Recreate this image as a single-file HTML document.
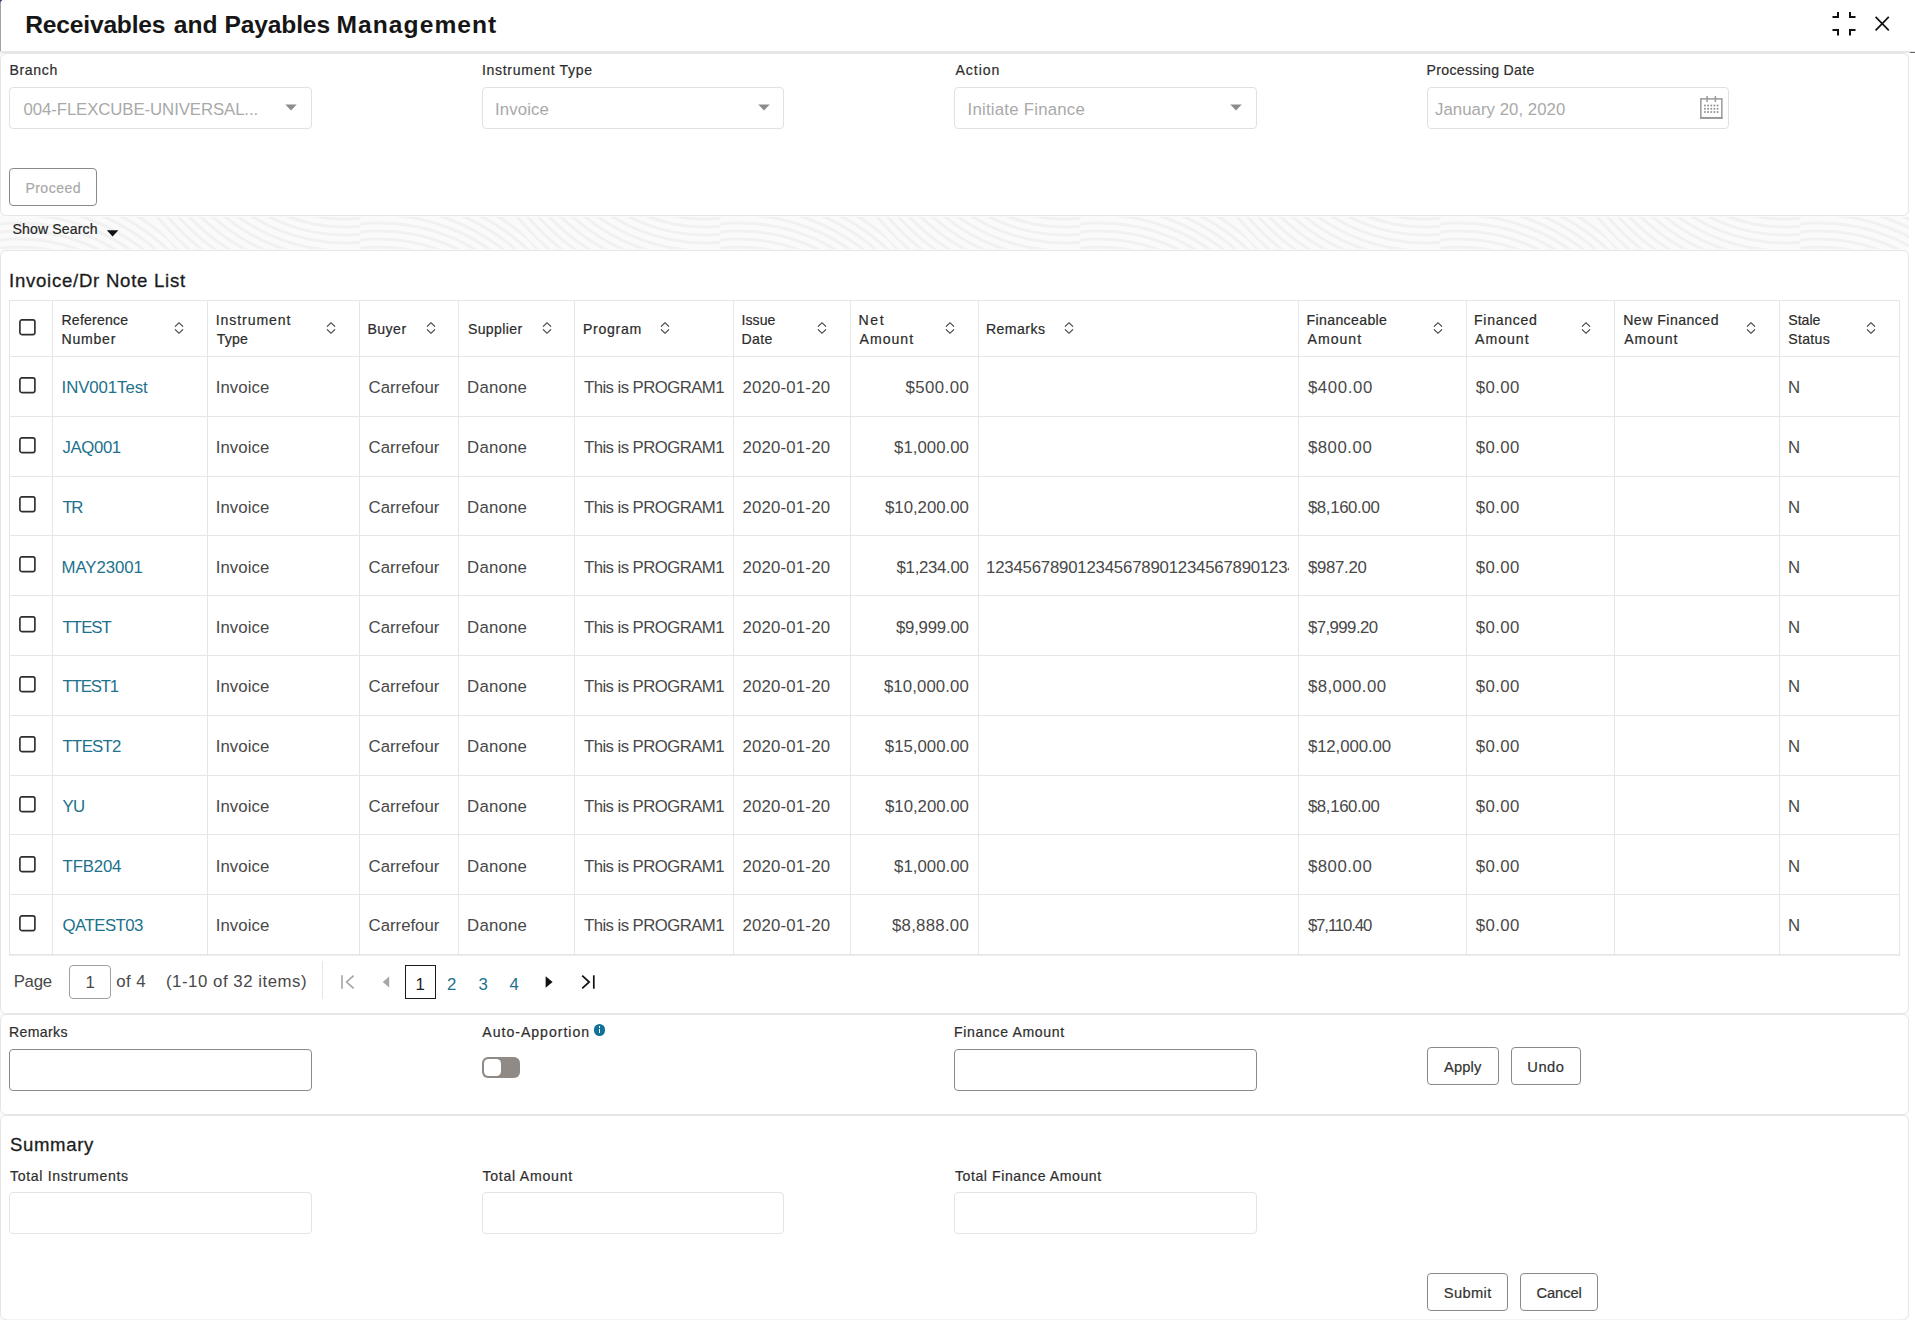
<!DOCTYPE html>
<html><head><meta charset="utf-8"><title>Receivables and Payables Management</title><style>
html,body{margin:0;padding:0;}body{width:1915px;height:1323px;position:relative;overflow:hidden;background:#fff;font-family:"Liberation Sans", sans-serif;}
.t{position:absolute;white-space:nowrap;}
</style></head><body>
<div style="position:absolute;left:0px;top:53px;width:1909px;height:1267px;background:#fafafa;"></div>
<svg style="position:absolute;left:0;top:217px" width="1909" height="32"><defs><clipPath id="c1"><path d="M0 0H150L200 64H0Z"/></clipPath><clipPath id="c2"><path d="M150 0H360V64H200Z"/></clipPath><pattern id="tx" width="360" height="64" patternUnits="userSpaceOnUse"><g fill="none" stroke="#f1f1f1" stroke-width="3"><g clip-path="url(#c1)"><circle cx="20" cy="190" r="24"/><circle cx="20" cy="190" r="32"/><circle cx="20" cy="190" r="40"/><circle cx="20" cy="190" r="48"/><circle cx="20" cy="190" r="56"/><circle cx="20" cy="190" r="64"/><circle cx="20" cy="190" r="72"/><circle cx="20" cy="190" r="80"/><circle cx="20" cy="190" r="88"/><circle cx="20" cy="190" r="96"/><circle cx="20" cy="190" r="104"/><circle cx="20" cy="190" r="112"/><circle cx="20" cy="190" r="120"/><circle cx="20" cy="190" r="128"/><circle cx="20" cy="190" r="136"/><circle cx="20" cy="190" r="144"/><circle cx="20" cy="190" r="152"/><circle cx="20" cy="190" r="160"/><circle cx="20" cy="190" r="168"/><circle cx="20" cy="190" r="176"/><circle cx="20" cy="190" r="184"/><circle cx="20" cy="190" r="192"/><circle cx="20" cy="190" r="200"/><circle cx="20" cy="190" r="208"/><circle cx="20" cy="190" r="216"/><circle cx="20" cy="190" r="224"/><circle cx="20" cy="190" r="232"/><circle cx="20" cy="190" r="240"/><circle cx="20" cy="190" r="248"/><circle cx="20" cy="190" r="256"/><circle cx="20" cy="190" r="264"/><circle cx="20" cy="190" r="272"/><circle cx="20" cy="190" r="280"/><circle cx="20" cy="190" r="288"/><circle cx="20" cy="190" r="296"/><circle cx="20" cy="190" r="304"/><circle cx="20" cy="190" r="312"/><circle cx="20" cy="190" r="320"/><circle cx="20" cy="190" r="328"/></g><g clip-path="url(#c2)"><circle cx="345" cy="-150" r="24"/><circle cx="345" cy="-150" r="32"/><circle cx="345" cy="-150" r="40"/><circle cx="345" cy="-150" r="48"/><circle cx="345" cy="-150" r="56"/><circle cx="345" cy="-150" r="64"/><circle cx="345" cy="-150" r="72"/><circle cx="345" cy="-150" r="80"/><circle cx="345" cy="-150" r="88"/><circle cx="345" cy="-150" r="96"/><circle cx="345" cy="-150" r="104"/><circle cx="345" cy="-150" r="112"/><circle cx="345" cy="-150" r="120"/><circle cx="345" cy="-150" r="128"/><circle cx="345" cy="-150" r="136"/><circle cx="345" cy="-150" r="144"/><circle cx="345" cy="-150" r="152"/><circle cx="345" cy="-150" r="160"/><circle cx="345" cy="-150" r="168"/><circle cx="345" cy="-150" r="176"/><circle cx="345" cy="-150" r="184"/><circle cx="345" cy="-150" r="192"/><circle cx="345" cy="-150" r="200"/><circle cx="345" cy="-150" r="208"/><circle cx="345" cy="-150" r="216"/><circle cx="345" cy="-150" r="224"/><circle cx="345" cy="-150" r="232"/><circle cx="345" cy="-150" r="240"/><circle cx="345" cy="-150" r="248"/><circle cx="345" cy="-150" r="256"/><circle cx="345" cy="-150" r="264"/><circle cx="345" cy="-150" r="272"/><circle cx="345" cy="-150" r="280"/><circle cx="345" cy="-150" r="288"/><circle cx="345" cy="-150" r="296"/><circle cx="345" cy="-150" r="304"/><circle cx="345" cy="-150" r="312"/><circle cx="345" cy="-150" r="320"/><circle cx="345" cy="-150" r="328"/></g></g></pattern></defs><rect width="1909" height="32" fill="url(#tx)"/></svg>
<div style="position:absolute;left:0px;top:0px;width:1915px;height:51px;background:#fff;"></div>
<div style="position:absolute;left:0px;top:51px;width:1915px;height:2px;background:#e6e6e6;"></div>
<div style="position:absolute;left:1910px;top:52px;width:5px;height:1px;background:#666;"></div>
<div style="position:absolute;left:0px;top:2px;width:1px;height:49px;background:#a2a2a8;"></div>
<svg style="position:absolute;left:0px;top:0px" width="3" height="3" viewBox="0 0 3 3"><path d="M0 0H2.4L0 2.4Z" fill="#3b4070"/></svg>
<svg style="position:absolute;left:1830px;top:10px" width="28" height="28" viewBox="0 0 28 28"><g fill="none" stroke="#111" stroke-width="2"><path d="M2.5 7H8V2"/><path d="M25.5 7H20V2"/><path d="M2.5 20H8V25.5"/><path d="M25.5 20H20V25.5"/></g></svg>
<svg style="position:absolute;left:1873px;top:14px" width="20" height="20" viewBox="0 0 20 20"><path d="M2.6 2.9L15.8 16.3M15.8 2.9L2.6 16.3" stroke="#111" stroke-width="1.7" fill="none"/></svg>
<div style="position:absolute;left:0px;top:53px;width:1907px;height:161px;border:1px solid #e6e6e6;border-radius:6px;background:#fff;"></div>
<div style="position:absolute;left:0px;top:249.5px;width:1907px;height:762.0px;border:1px solid #e6e6e6;border-radius:6px;background:#fff;"></div>
<div style="position:absolute;left:0px;top:1013.5px;width:1907px;height:99.0px;border:1px solid #e6e6e6;border-radius:6px;background:#fff;"></div>
<div style="position:absolute;left:0px;top:1114.5px;width:1907px;height:203.5px;border:1px solid #e6e6e6;border-radius:6px;background:#fff;"></div>
<div style="position:absolute;left:6px;top:1319px;width:1897px;height:1px;background:#f3f3f3;"></div>
<div style="position:absolute;left:9px;top:87px;width:301px;height:40px;border:1px solid #e1e1e1;border-radius:4px;background:#fff;"></div>
<div style="position:absolute;left:482px;top:87px;width:300px;height:40px;border:1px solid #e1e1e1;border-radius:4px;background:#fff;"></div>
<div style="position:absolute;left:954px;top:87px;width:301px;height:40px;border:1px solid #e1e1e1;border-radius:4px;background:#fff;"></div>
<svg style="position:absolute;left:285px;top:104px" width="13" height="8" viewBox="0 0 13 8"><path d="M0.3 0.6H11.7L6 6.4Z" fill="#8c8c8c"/></svg>
<svg style="position:absolute;left:757.5px;top:104px" width="13" height="8" viewBox="0 0 13 8"><path d="M0.3 0.6H11.7L6 6.4Z" fill="#8c8c8c"/></svg>
<svg style="position:absolute;left:1230px;top:104px" width="13" height="8" viewBox="0 0 13 8"><path d="M0.3 0.6H11.7L6 6.4Z" fill="#8c8c8c"/></svg>
<div style="position:absolute;left:1427px;top:87px;width:300px;height:40px;border:1px solid #e1e1e1;border-radius:4px;background:#fff;"></div>
<svg style="position:absolute;left:1699px;top:95px" width="26" height="26" viewBox="0 0 26 26"><g fill="none" stroke="#999" stroke-width="1.5"><rect x="1.85" y="3.85" width="21" height="19.2"/><path d="M8.1 1V7M16.4 1V7"/><path d="M1.1 22.9H23.6" stroke-width="1.9"/></g><g fill="#8e8e8e"><rect x="5.05" y="9.65" width="1.7" height="1.7"/><rect x="8.25" y="9.65" width="1.7" height="1.7"/><rect x="11.45" y="9.65" width="1.7" height="1.7"/><rect x="14.55" y="9.65" width="1.7" height="1.7"/><rect x="17.75" y="9.65" width="1.7" height="1.7"/><rect x="5.05" y="12.95" width="1.7" height="1.7"/><rect x="8.25" y="12.95" width="1.7" height="1.7"/><rect x="11.45" y="12.95" width="1.7" height="1.7"/><rect x="14.55" y="12.95" width="1.7" height="1.7"/><rect x="17.75" y="12.95" width="1.7" height="1.7"/><rect x="5.05" y="16.15" width="1.7" height="1.7"/><rect x="8.25" y="16.15" width="1.7" height="1.7"/><rect x="11.45" y="16.15" width="1.7" height="1.7"/><rect x="14.55" y="16.15" width="1.7" height="1.7"/><rect x="17.75" y="16.15" width="1.7" height="1.7"/></g></svg>
<div style="position:absolute;left:9px;top:168px;width:86px;height:36px;border:1px solid #8a8a8a;border-radius:4px;background:#fff;"></div>
<svg style="position:absolute;left:106px;top:229px" width="14" height="9" viewBox="0 0 14 9"><path d="M0.8 1.2H12.4L6.6 7.6Z" fill="#111"/></svg>
<div style="position:absolute;left:9px;top:300px;width:1891px;height:1px;background:#e6e6e6;"></div>
<div style="position:absolute;left:9px;top:356px;width:1891px;height:1px;background:#e6e6e6;"></div>
<div style="position:absolute;left:9px;top:416px;width:1891px;height:1px;background:#e6e6e6;"></div>
<div style="position:absolute;left:9px;top:476px;width:1891px;height:1px;background:#e6e6e6;"></div>
<div style="position:absolute;left:9px;top:535px;width:1891px;height:1px;background:#e6e6e6;"></div>
<div style="position:absolute;left:9px;top:595px;width:1891px;height:1px;background:#e6e6e6;"></div>
<div style="position:absolute;left:9px;top:655px;width:1891px;height:1px;background:#e6e6e6;"></div>
<div style="position:absolute;left:9px;top:715px;width:1891px;height:1px;background:#e6e6e6;"></div>
<div style="position:absolute;left:9px;top:775px;width:1891px;height:1px;background:#e6e6e6;"></div>
<div style="position:absolute;left:9px;top:834px;width:1891px;height:1px;background:#e6e6e6;"></div>
<div style="position:absolute;left:9px;top:894px;width:1891px;height:1px;background:#e6e6e6;"></div>
<div style="position:absolute;left:9px;top:954px;width:1891px;height:1px;background:#e6e6e6;"></div>
<div style="position:absolute;left:9px;top:955px;width:1891px;height:1px;background:#ececec;"></div>
<div style="position:absolute;left:9px;top:300px;width:1px;height:655px;background:#e6e6e6;"></div>
<div style="position:absolute;left:52px;top:300px;width:1px;height:655px;background:#e6e6e6;"></div>
<div style="position:absolute;left:207px;top:300px;width:1px;height:655px;background:#e6e6e6;"></div>
<div style="position:absolute;left:359px;top:300px;width:1px;height:655px;background:#e6e6e6;"></div>
<div style="position:absolute;left:458px;top:300px;width:1px;height:655px;background:#e6e6e6;"></div>
<div style="position:absolute;left:574px;top:300px;width:1px;height:655px;background:#e6e6e6;"></div>
<div style="position:absolute;left:733px;top:300px;width:1px;height:655px;background:#e6e6e6;"></div>
<div style="position:absolute;left:850px;top:300px;width:1px;height:655px;background:#e6e6e6;"></div>
<div style="position:absolute;left:978px;top:300px;width:1px;height:655px;background:#e6e6e6;"></div>
<div style="position:absolute;left:1298px;top:300px;width:1px;height:655px;background:#e6e6e6;"></div>
<div style="position:absolute;left:1466px;top:300px;width:1px;height:655px;background:#e6e6e6;"></div>
<div style="position:absolute;left:1614px;top:300px;width:1px;height:655px;background:#e6e6e6;"></div>
<div style="position:absolute;left:1779px;top:300px;width:1px;height:655px;background:#e6e6e6;"></div>
<div style="position:absolute;left:1899px;top:300px;width:1px;height:655px;background:#e6e6e6;"></div>
<svg style="position:absolute;left:18px;top:318.4px" width="19" height="19" viewBox="0 0 19 19"><rect x="1.9" y="1.9" width="15" height="14.7" rx="2" fill="#fff" stroke="#2e2e2e" stroke-width="1.65"/></svg>
<svg style="position:absolute;left:173.2px;top:321px" width="12" height="14" viewBox="0 0 12 14"><g fill="none" stroke="#3a3a3a" stroke-width="1.15"><path d="M2 5.6L6 1.7L10 5.6"/><path d="M2 8.4L6 12.3L10 8.4"/></g></svg>
<svg style="position:absolute;left:325.2px;top:321px" width="12" height="14" viewBox="0 0 12 14"><g fill="none" stroke="#3a3a3a" stroke-width="1.15"><path d="M2 5.6L6 1.7L10 5.6"/><path d="M2 8.4L6 12.3L10 8.4"/></g></svg>
<svg style="position:absolute;left:424.5px;top:321px" width="12" height="14" viewBox="0 0 12 14"><g fill="none" stroke="#3a3a3a" stroke-width="1.15"><path d="M2 5.6L6 1.7L10 5.6"/><path d="M2 8.4L6 12.3L10 8.4"/></g></svg>
<svg style="position:absolute;left:540.5px;top:321px" width="12" height="14" viewBox="0 0 12 14"><g fill="none" stroke="#3a3a3a" stroke-width="1.15"><path d="M2 5.6L6 1.7L10 5.6"/><path d="M2 8.4L6 12.3L10 8.4"/></g></svg>
<svg style="position:absolute;left:658.5px;top:321px" width="12" height="14" viewBox="0 0 12 14"><g fill="none" stroke="#3a3a3a" stroke-width="1.15"><path d="M2 5.6L6 1.7L10 5.6"/><path d="M2 8.4L6 12.3L10 8.4"/></g></svg>
<svg style="position:absolute;left:816.2px;top:321px" width="12" height="14" viewBox="0 0 12 14"><g fill="none" stroke="#3a3a3a" stroke-width="1.15"><path d="M2 5.6L6 1.7L10 5.6"/><path d="M2 8.4L6 12.3L10 8.4"/></g></svg>
<svg style="position:absolute;left:944.2px;top:321px" width="12" height="14" viewBox="0 0 12 14"><g fill="none" stroke="#3a3a3a" stroke-width="1.15"><path d="M2 5.6L6 1.7L10 5.6"/><path d="M2 8.4L6 12.3L10 8.4"/></g></svg>
<svg style="position:absolute;left:1063.0px;top:321px" width="12" height="14" viewBox="0 0 12 14"><g fill="none" stroke="#3a3a3a" stroke-width="1.15"><path d="M2 5.6L6 1.7L10 5.6"/><path d="M2 8.4L6 12.3L10 8.4"/></g></svg>
<svg style="position:absolute;left:1432.2px;top:321px" width="12" height="14" viewBox="0 0 12 14"><g fill="none" stroke="#3a3a3a" stroke-width="1.15"><path d="M2 5.6L6 1.7L10 5.6"/><path d="M2 8.4L6 12.3L10 8.4"/></g></svg>
<svg style="position:absolute;left:1580.2px;top:321px" width="12" height="14" viewBox="0 0 12 14"><g fill="none" stroke="#3a3a3a" stroke-width="1.15"><path d="M2 5.6L6 1.7L10 5.6"/><path d="M2 8.4L6 12.3L10 8.4"/></g></svg>
<svg style="position:absolute;left:1745.2px;top:321px" width="12" height="14" viewBox="0 0 12 14"><g fill="none" stroke="#3a3a3a" stroke-width="1.15"><path d="M2 5.6L6 1.7L10 5.6"/><path d="M2 8.4L6 12.3L10 8.4"/></g></svg>
<svg style="position:absolute;left:1865.2px;top:321px" width="12" height="14" viewBox="0 0 12 14"><g fill="none" stroke="#3a3a3a" stroke-width="1.15"><path d="M2 5.6L6 1.7L10 5.6"/><path d="M2 8.4L6 12.3L10 8.4"/></g></svg>
<svg style="position:absolute;left:18px;top:376px" width="19" height="19" viewBox="0 0 19 19"><rect x="1.9" y="1.9" width="15" height="14.7" rx="2" fill="#fff" stroke="#2e2e2e" stroke-width="1.65"/></svg>
<svg style="position:absolute;left:18px;top:436px" width="19" height="19" viewBox="0 0 19 19"><rect x="1.9" y="1.9" width="15" height="14.7" rx="2" fill="#fff" stroke="#2e2e2e" stroke-width="1.65"/></svg>
<svg style="position:absolute;left:18px;top:495px" width="19" height="19" viewBox="0 0 19 19"><rect x="1.9" y="1.9" width="15" height="14.7" rx="2" fill="#fff" stroke="#2e2e2e" stroke-width="1.65"/></svg>
<svg style="position:absolute;left:18px;top:555px" width="19" height="19" viewBox="0 0 19 19"><rect x="1.9" y="1.9" width="15" height="14.7" rx="2" fill="#fff" stroke="#2e2e2e" stroke-width="1.65"/></svg>
<svg style="position:absolute;left:18px;top:615px" width="19" height="19" viewBox="0 0 19 19"><rect x="1.9" y="1.9" width="15" height="14.7" rx="2" fill="#fff" stroke="#2e2e2e" stroke-width="1.65"/></svg>
<svg style="position:absolute;left:18px;top:675px" width="19" height="19" viewBox="0 0 19 19"><rect x="1.9" y="1.9" width="15" height="14.7" rx="2" fill="#fff" stroke="#2e2e2e" stroke-width="1.65"/></svg>
<svg style="position:absolute;left:18px;top:735px" width="19" height="19" viewBox="0 0 19 19"><rect x="1.9" y="1.9" width="15" height="14.7" rx="2" fill="#fff" stroke="#2e2e2e" stroke-width="1.65"/></svg>
<svg style="position:absolute;left:18px;top:795px" width="19" height="19" viewBox="0 0 19 19"><rect x="1.9" y="1.9" width="15" height="14.7" rx="2" fill="#fff" stroke="#2e2e2e" stroke-width="1.65"/></svg>
<svg style="position:absolute;left:18px;top:855px" width="19" height="19" viewBox="0 0 19 19"><rect x="1.9" y="1.9" width="15" height="14.7" rx="2" fill="#fff" stroke="#2e2e2e" stroke-width="1.65"/></svg>
<svg style="position:absolute;left:18px;top:914px" width="19" height="19" viewBox="0 0 19 19"><rect x="1.9" y="1.9" width="15" height="14.7" rx="2" fill="#fff" stroke="#2e2e2e" stroke-width="1.65"/></svg>
<div style="position:absolute;left:69px;top:965px;width:40px;height:32px;border:1px solid #a0a0a0;border-radius:4px;background:#fff;"></div>
<div style="position:absolute;left:322px;top:961px;width:1px;height:38px;background:#e6e6e6;"></div>
<svg style="position:absolute;left:338.6px;top:973px" width="18" height="18" viewBox="0 0 18 18"><g fill="none" stroke="#a3a3a3" stroke-width="1.6"><path d="M3 2.3V15.7"/><path d="M14.6 2.6L7.6 9L14.6 15.4"/></g></svg>
<svg style="position:absolute;left:380px;top:974px" width="12" height="16" viewBox="0 0 12 16"><path d="M9.2 2.6V13.4L2.8 8Z" fill="#a6a6a6"/></svg>
<div style="position:absolute;left:405px;top:965px;width:29px;height:32px;border:1px solid #1a1a1a;border-radius:0px;background:#fff;"></div>
<svg style="position:absolute;left:543px;top:974px" width="12" height="16" viewBox="0 0 12 16"><path d="M2.6 2.2V13.8L9.6 8Z" fill="#111"/></svg>
<svg style="position:absolute;left:579px;top:973px" width="18" height="18" viewBox="0 0 18 18"><g fill="none" stroke="#111" stroke-width="1.7"><path d="M14.8 2.3V15.7"/><path d="M3.2 2.6L10.2 9L3.2 15.4"/></g></svg>
<div style="position:absolute;left:9px;top:1049px;width:301px;height:40px;border:1px solid #8a8a8a;border-radius:4px;background:#fff;"></div>
<div style="position:absolute;left:593.8px;top:1024.2px;width:11.4px;height:11.4px;border-radius:50%;background:#0f7298"></div>
<div style="position:absolute;left:598.9px;top:1026.3px;width:1.3px;height:1.5px;background:#fff;"></div>
<div style="position:absolute;left:598.9px;top:1028.6px;width:1.3px;height:4.6px;background:#fff;"></div>
<div style="position:absolute;left:482px;top:1057.2px;width:38px;height:21.3px;border-radius:6px;background:#8f8a86"></div>
<div style="position:absolute;left:483.8px;top:1058.9px;width:17.2px;height:17.5px;border-radius:4.5px;background:#fff"></div>
<div style="position:absolute;left:954px;top:1049px;width:301px;height:40px;border:1px solid #8a8a8a;border-radius:4px;background:#fff;"></div>
<div style="position:absolute;left:1427px;top:1047px;width:70px;height:36px;border:1px solid #8a8a8a;border-radius:4px;background:#fff;"></div>
<div style="position:absolute;left:1511px;top:1047px;width:68px;height:36px;border:1px solid #8a8a8a;border-radius:4px;background:#fff;"></div>
<div style="position:absolute;left:9px;top:1192px;width:301px;height:40px;border:1px solid #e4e4e4;border-radius:4px;background:#fff;"></div>
<div style="position:absolute;left:482px;top:1192px;width:300px;height:40px;border:1px solid #e4e4e4;border-radius:4px;background:#fff;"></div>
<div style="position:absolute;left:954px;top:1192px;width:301px;height:40px;border:1px solid #e4e4e4;border-radius:4px;background:#fff;"></div>
<div style="position:absolute;left:1427px;top:1273px;width:79px;height:36px;border:1px solid #8a8a8a;border-radius:4px;background:#fff;"></div>
<div style="position:absolute;left:1520px;top:1273px;width:76px;height:36px;border:1px solid #8a8a8a;border-radius:4px;background:#fff;"></div>
<span class="t" id="t0" style="top:12.60px;font-size:24.6px;line-height:24.6px;font-weight:700;color:#161616;letter-spacing:-0.202px;left:25.30px;">Receivables</span>
<span class="t" id="t1" style="top:12.60px;font-size:24.6px;line-height:24.6px;font-weight:700;color:#161616;letter-spacing:-0.050px;left:173.80px;">and</span>
<span class="t" id="t2" style="top:12.60px;font-size:24.6px;line-height:24.6px;font-weight:700;color:#161616;letter-spacing:-0.139px;left:224.40px;">Payables</span>
<span class="t" id="t3" style="top:12.60px;font-size:24.6px;line-height:24.6px;font-weight:700;color:#161616;letter-spacing:1.052px;left:336.50px;">Management</span>
<span class="t" id="t4" style="top:63.00px;font-size:14.1px;line-height:14.1px;font-weight:400;color:#2e2e2e;-webkit-text-stroke:0.2px #2e2e2e;letter-spacing:0.637px;left:9.50px;">Branch</span>
<span class="t" id="t5" style="top:101.80px;font-size:16.8px;line-height:16.8px;font-weight:400;color:#a9a9a9;letter-spacing:-0.092px;left:23.50px;">004-FLEXCUBE-UNIVERSAL...</span>
<span class="t" id="t6" style="top:63.00px;font-size:14.1px;line-height:14.1px;font-weight:400;color:#2e2e2e;-webkit-text-stroke:0.2px #2e2e2e;letter-spacing:0.663px;left:482.00px;">Instrument Type</span>
<span class="t" id="t7" style="top:101.80px;font-size:16.8px;line-height:16.8px;font-weight:400;color:#a9a9a9;letter-spacing:0.110px;left:495.00px;">Invoice</span>
<span class="t" id="t8" style="top:63.00px;font-size:14.1px;line-height:14.1px;font-weight:400;color:#2e2e2e;-webkit-text-stroke:0.2px #2e2e2e;letter-spacing:0.934px;left:955.50px;">Action</span>
<span class="t" id="t9" style="top:101.80px;font-size:16.8px;line-height:16.8px;font-weight:400;color:#a9a9a9;letter-spacing:0.235px;left:967.50px;">Initiate Finance</span>
<span class="t" id="t10" style="top:63.00px;font-size:14.1px;line-height:14.1px;font-weight:400;color:#2e2e2e;-webkit-text-stroke:0.2px #2e2e2e;letter-spacing:0.317px;left:1426.50px;">Processing Date</span>
<span class="t" id="t11" style="top:101.80px;font-size:16.8px;line-height:16.8px;font-weight:400;color:#a9a9a9;letter-spacing:0.043px;left:1435.00px;">January 20, 2020</span>
<span class="t" id="t12" style="top:180.61px;font-size:14.1px;line-height:14.1px;font-weight:400;color:#a9a9a9;-webkit-text-stroke:0.2px #a9a9a9;letter-spacing:0.441px;left:25.40px;">Proceed</span>
<span class="t" id="t13" style="top:221.51px;font-size:14.1px;line-height:14.1px;font-weight:400;color:#262626;-webkit-text-stroke:0.2px #262626;letter-spacing:0.131px;left:12.50px;">Show Search</span>
<span class="t" id="t14" style="top:271.71px;font-size:18.6px;line-height:18.6px;font-weight:400;color:#1c1c1c;-webkit-text-stroke:0.3px #1c1c1c;letter-spacing:0.733px;left:9.00px;">Invoice/Dr Note List</span>
<span class="t" id="t15" style="top:313.01px;font-size:14.1px;line-height:14.1px;font-weight:400;color:#2b2b2b;-webkit-text-stroke:0.2px #2b2b2b;letter-spacing:0.189px;left:61.50px;">Reference</span>
<span class="t" id="t16" style="top:331.91px;font-size:14.1px;line-height:14.1px;font-weight:400;color:#2b2b2b;-webkit-text-stroke:0.2px #2b2b2b;letter-spacing:0.753px;left:61.50px;">Number</span>
<span class="t" id="t17" style="top:313.01px;font-size:14.1px;line-height:14.1px;font-weight:400;color:#2b2b2b;-webkit-text-stroke:0.2px #2b2b2b;letter-spacing:0.915px;left:215.70px;">Instrument</span>
<span class="t" id="t18" style="top:331.91px;font-size:14.1px;line-height:14.1px;font-weight:400;color:#2b2b2b;-webkit-text-stroke:0.2px #2b2b2b;letter-spacing:0.228px;left:216.70px;">Type</span>
<span class="t" id="t19" style="top:322.01px;font-size:14.1px;line-height:14.1px;font-weight:400;color:#2b2b2b;-webkit-text-stroke:0.2px #2b2b2b;letter-spacing:0.469px;left:367.40px;">Buyer</span>
<span class="t" id="t20" style="top:322.01px;font-size:14.1px;line-height:14.1px;font-weight:400;color:#2b2b2b;-webkit-text-stroke:0.2px #2b2b2b;letter-spacing:0.355px;left:467.90px;">Supplier</span>
<span class="t" id="t21" style="top:322.01px;font-size:14.1px;line-height:14.1px;font-weight:400;color:#2b2b2b;-webkit-text-stroke:0.2px #2b2b2b;letter-spacing:0.683px;left:583.00px;">Program</span>
<span class="t" id="t22" style="top:313.01px;font-size:14.1px;line-height:14.1px;font-weight:400;color:#2b2b2b;-webkit-text-stroke:0.2px #2b2b2b;letter-spacing:0.088px;left:741.40px;">Issue</span>
<span class="t" id="t23" style="top:331.91px;font-size:14.1px;line-height:14.1px;font-weight:400;color:#2b2b2b;-webkit-text-stroke:0.2px #2b2b2b;letter-spacing:0.389px;left:741.40px;">Date</span>
<span class="t" id="t24" style="top:313.01px;font-size:14.1px;line-height:14.1px;font-weight:400;color:#2b2b2b;-webkit-text-stroke:0.2px #2b2b2b;letter-spacing:1.642px;left:858.50px;">Net</span>
<span class="t" id="t25" style="top:331.91px;font-size:14.1px;line-height:14.1px;font-weight:400;color:#2b2b2b;-webkit-text-stroke:0.2px #2b2b2b;letter-spacing:1.009px;left:859.50px;">Amount</span>
<span class="t" id="t26" style="top:322.01px;font-size:14.1px;line-height:14.1px;font-weight:400;color:#2b2b2b;-webkit-text-stroke:0.2px #2b2b2b;letter-spacing:0.427px;left:986.00px;">Remarks</span>
<span class="t" id="t27" style="top:313.01px;font-size:14.1px;line-height:14.1px;font-weight:400;color:#2b2b2b;-webkit-text-stroke:0.2px #2b2b2b;letter-spacing:0.365px;left:1306.50px;">Financeable</span>
<span class="t" id="t28" style="top:331.91px;font-size:14.1px;line-height:14.1px;font-weight:400;color:#2b2b2b;-webkit-text-stroke:0.2px #2b2b2b;letter-spacing:1.009px;left:1307.50px;">Amount</span>
<span class="t" id="t29" style="top:313.01px;font-size:14.1px;line-height:14.1px;font-weight:400;color:#2b2b2b;-webkit-text-stroke:0.2px #2b2b2b;letter-spacing:0.694px;left:1474.00px;">Financed</span>
<span class="t" id="t30" style="top:331.91px;font-size:14.1px;line-height:14.1px;font-weight:400;color:#2b2b2b;-webkit-text-stroke:0.2px #2b2b2b;letter-spacing:1.009px;left:1475.00px;">Amount</span>
<span class="t" id="t31" style="top:313.01px;font-size:14.1px;line-height:14.1px;font-weight:400;color:#2b2b2b;-webkit-text-stroke:0.2px #2b2b2b;letter-spacing:0.477px;left:1623.20px;">New Financed</span>
<span class="t" id="t32" style="top:331.91px;font-size:14.1px;line-height:14.1px;font-weight:400;color:#2b2b2b;-webkit-text-stroke:0.2px #2b2b2b;letter-spacing:0.929px;left:1624.20px;">Amount</span>
<span class="t" id="t33" style="top:313.01px;font-size:14.1px;line-height:14.1px;font-weight:400;color:#2b2b2b;-webkit-text-stroke:0.2px #2b2b2b;letter-spacing:-0.021px;left:1788.30px;">Stale</span>
<span class="t" id="t34" style="top:331.91px;font-size:14.1px;line-height:14.1px;font-weight:400;color:#2b2b2b;-webkit-text-stroke:0.2px #2b2b2b;letter-spacing:0.298px;left:1788.30px;">Status</span>
<span class="t" id="t35" style="top:380.21px;font-size:16.8px;line-height:16.8px;font-weight:400;color:#22718c;letter-spacing:-0.076px;left:61.60px;">INV001Test</span>
<span class="t" id="t36" style="top:380.21px;font-size:16.8px;line-height:16.8px;font-weight:400;color:#484848;letter-spacing:0.077px;left:215.70px;">Invoice</span>
<span class="t" id="t37" style="top:380.21px;font-size:16.8px;line-height:16.8px;font-weight:400;color:#484848;letter-spacing:-0.024px;left:368.60px;">Carrefour</span>
<span class="t" id="t38" style="top:380.21px;font-size:16.8px;line-height:16.8px;font-weight:400;color:#484848;letter-spacing:0.170px;left:467.10px;">Danone</span>
<span class="t" id="t39" style="top:380.21px;font-size:16.8px;line-height:16.8px;font-weight:400;color:#484848;letter-spacing:-0.577px;left:584.00px;">This is PROGRAM1</span>
<span class="t" id="t40" style="top:380.21px;font-size:16.8px;line-height:16.8px;font-weight:400;color:#484848;letter-spacing:0.199px;left:742.40px;">2020-01-20</span>
<span class="t" id="t41" style="top:380.21px;font-size:16.8px;line-height:16.8px;font-weight:400;color:#484848;letter-spacing:0.445px;right:945.72px;">$500.00</span>
<span class="t" id="t42" style="top:380.21px;font-size:16.8px;line-height:16.8px;font-weight:400;color:#484848;letter-spacing:0.645px;left:1307.90px;">$400.00</span>
<span class="t" id="t43" style="top:380.21px;font-size:16.8px;line-height:16.8px;font-weight:400;color:#484848;letter-spacing:0.360px;left:1475.80px;">$0.00</span>
<span class="t" id="t44" style="top:380.21px;font-size:16.8px;line-height:16.8px;font-weight:400;color:#484848;left:1788.00px;">N</span>
<span class="t" id="t45" style="top:440.05px;font-size:16.8px;line-height:16.8px;font-weight:400;color:#22718c;letter-spacing:-0.420px;left:62.60px;">JAQ001</span>
<span class="t" id="t46" style="top:440.05px;font-size:16.8px;line-height:16.8px;font-weight:400;color:#484848;letter-spacing:0.077px;left:215.70px;">Invoice</span>
<span class="t" id="t47" style="top:440.05px;font-size:16.8px;line-height:16.8px;font-weight:400;color:#484848;letter-spacing:-0.024px;left:368.60px;">Carrefour</span>
<span class="t" id="t48" style="top:440.05px;font-size:16.8px;line-height:16.8px;font-weight:400;color:#484848;letter-spacing:0.170px;left:467.10px;">Danone</span>
<span class="t" id="t49" style="top:440.05px;font-size:16.8px;line-height:16.8px;font-weight:400;color:#484848;letter-spacing:-0.577px;left:584.00px;">This is PROGRAM1</span>
<span class="t" id="t50" style="top:440.05px;font-size:16.8px;line-height:16.8px;font-weight:400;color:#484848;letter-spacing:0.199px;left:742.40px;">2020-01-20</span>
<span class="t" id="t51" style="top:440.05px;font-size:16.8px;line-height:16.8px;font-weight:400;color:#484848;letter-spacing:0.010px;right:946.16px;">$1,000.00</span>
<span class="t" id="t52" style="top:440.05px;font-size:16.8px;line-height:16.8px;font-weight:400;color:#484848;letter-spacing:0.529px;left:1307.90px;">$800.00</span>
<span class="t" id="t53" style="top:440.05px;font-size:16.8px;line-height:16.8px;font-weight:400;color:#484848;letter-spacing:0.360px;left:1475.80px;">$0.00</span>
<span class="t" id="t54" style="top:440.05px;font-size:16.8px;line-height:16.8px;font-weight:400;color:#484848;left:1788.00px;">N</span>
<span class="t" id="t55" style="top:499.89px;font-size:16.8px;line-height:16.8px;font-weight:400;color:#22718c;letter-spacing:-1.500px;left:62.60px;">TR</span>
<span class="t" id="t56" style="top:499.89px;font-size:16.8px;line-height:16.8px;font-weight:400;color:#484848;letter-spacing:0.077px;left:215.70px;">Invoice</span>
<span class="t" id="t57" style="top:499.89px;font-size:16.8px;line-height:16.8px;font-weight:400;color:#484848;letter-spacing:-0.024px;left:368.60px;">Carrefour</span>
<span class="t" id="t58" style="top:499.89px;font-size:16.8px;line-height:16.8px;font-weight:400;color:#484848;letter-spacing:0.170px;left:467.10px;">Danone</span>
<span class="t" id="t59" style="top:499.89px;font-size:16.8px;line-height:16.8px;font-weight:400;color:#484848;letter-spacing:-0.577px;left:584.00px;">This is PROGRAM1</span>
<span class="t" id="t60" style="top:499.89px;font-size:16.8px;line-height:16.8px;font-weight:400;color:#484848;letter-spacing:0.199px;left:742.40px;">2020-01-20</span>
<span class="t" id="t61" style="top:499.89px;font-size:16.8px;line-height:16.8px;font-weight:400;color:#484848;letter-spacing:-0.017px;right:946.18px;">$10,200.00</span>
<span class="t" id="t62" style="top:499.89px;font-size:16.8px;line-height:16.8px;font-weight:400;color:#484848;letter-spacing:-0.353px;left:1307.90px;">$8,160.00</span>
<span class="t" id="t63" style="top:499.89px;font-size:16.8px;line-height:16.8px;font-weight:400;color:#484848;letter-spacing:0.360px;left:1475.80px;">$0.00</span>
<span class="t" id="t64" style="top:499.89px;font-size:16.8px;line-height:16.8px;font-weight:400;color:#484848;left:1788.00px;">N</span>
<span class="t" id="t65" style="top:559.72px;font-size:16.8px;line-height:16.8px;font-weight:400;color:#22718c;letter-spacing:-0.093px;left:61.60px;">MAY23001</span>
<span class="t" id="t66" style="top:559.72px;font-size:16.8px;line-height:16.8px;font-weight:400;color:#484848;letter-spacing:0.077px;left:215.70px;">Invoice</span>
<span class="t" id="t67" style="top:559.72px;font-size:16.8px;line-height:16.8px;font-weight:400;color:#484848;letter-spacing:-0.024px;left:368.60px;">Carrefour</span>
<span class="t" id="t68" style="top:559.72px;font-size:16.8px;line-height:16.8px;font-weight:400;color:#484848;letter-spacing:0.170px;left:467.10px;">Danone</span>
<span class="t" id="t69" style="top:559.72px;font-size:16.8px;line-height:16.8px;font-weight:400;color:#484848;letter-spacing:-0.577px;left:584.00px;">This is PROGRAM1</span>
<span class="t" id="t70" style="top:559.72px;font-size:16.8px;line-height:16.8px;font-weight:400;color:#484848;letter-spacing:0.199px;left:742.40px;">2020-01-20</span>
<span class="t" id="t71" style="top:559.72px;font-size:16.8px;line-height:16.8px;font-weight:400;color:#484848;letter-spacing:-0.303px;right:946.47px;">$1,234.00</span>
<div style="position:absolute;left:987px;top:0;width:302px;height:1323px;overflow:hidden"><span class="t" id="t72" style="top:559.72px;font-size:16.8px;line-height:16.8px;font-weight:400;color:#484848;letter-spacing:-0.200px;left:-1.00px;">12345678901234567890123456789012345</span></div>
<span class="t" id="t73" style="top:559.72px;font-size:16.8px;line-height:16.8px;font-weight:400;color:#484848;letter-spacing:-0.288px;left:1307.90px;">$987.20</span>
<span class="t" id="t74" style="top:559.72px;font-size:16.8px;line-height:16.8px;font-weight:400;color:#484848;letter-spacing:0.360px;left:1475.80px;">$0.00</span>
<span class="t" id="t75" style="top:559.72px;font-size:16.8px;line-height:16.8px;font-weight:400;color:#484848;left:1788.00px;">N</span>
<span class="t" id="t76" style="top:619.57px;font-size:16.8px;line-height:16.8px;font-weight:400;color:#22718c;letter-spacing:-0.972px;left:62.60px;">TTEST</span>
<span class="t" id="t77" style="top:619.57px;font-size:16.8px;line-height:16.8px;font-weight:400;color:#484848;letter-spacing:0.077px;left:215.70px;">Invoice</span>
<span class="t" id="t78" style="top:619.57px;font-size:16.8px;line-height:16.8px;font-weight:400;color:#484848;letter-spacing:-0.024px;left:368.60px;">Carrefour</span>
<span class="t" id="t79" style="top:619.57px;font-size:16.8px;line-height:16.8px;font-weight:400;color:#484848;letter-spacing:0.170px;left:467.10px;">Danone</span>
<span class="t" id="t80" style="top:619.57px;font-size:16.8px;line-height:16.8px;font-weight:400;color:#484848;letter-spacing:-0.577px;left:584.00px;">This is PROGRAM1</span>
<span class="t" id="t81" style="top:619.57px;font-size:16.8px;line-height:16.8px;font-weight:400;color:#484848;letter-spacing:0.199px;left:742.40px;">2020-01-20</span>
<span class="t" id="t82" style="top:619.57px;font-size:16.8px;line-height:16.8px;font-weight:400;color:#484848;letter-spacing:-0.215px;right:946.38px;">$9,999.00</span>
<span class="t" id="t83" style="top:619.57px;font-size:16.8px;line-height:16.8px;font-weight:400;color:#484848;letter-spacing:-0.553px;left:1307.90px;">$7,999.20</span>
<span class="t" id="t84" style="top:619.57px;font-size:16.8px;line-height:16.8px;font-weight:400;color:#484848;letter-spacing:0.360px;left:1475.80px;">$0.00</span>
<span class="t" id="t85" style="top:619.57px;font-size:16.8px;line-height:16.8px;font-weight:400;color:#484848;left:1788.00px;">N</span>
<span class="t" id="t86" style="top:679.41px;font-size:16.8px;line-height:16.8px;font-weight:400;color:#22718c;letter-spacing:-1.188px;left:62.60px;">TTEST1</span>
<span class="t" id="t87" style="top:679.41px;font-size:16.8px;line-height:16.8px;font-weight:400;color:#484848;letter-spacing:0.077px;left:215.70px;">Invoice</span>
<span class="t" id="t88" style="top:679.41px;font-size:16.8px;line-height:16.8px;font-weight:400;color:#484848;letter-spacing:-0.024px;left:368.60px;">Carrefour</span>
<span class="t" id="t89" style="top:679.41px;font-size:16.8px;line-height:16.8px;font-weight:400;color:#484848;letter-spacing:0.170px;left:467.10px;">Danone</span>
<span class="t" id="t90" style="top:679.41px;font-size:16.8px;line-height:16.8px;font-weight:400;color:#484848;letter-spacing:-0.577px;left:584.00px;">This is PROGRAM1</span>
<span class="t" id="t91" style="top:679.41px;font-size:16.8px;line-height:16.8px;font-weight:400;color:#484848;letter-spacing:0.199px;left:742.40px;">2020-01-20</span>
<span class="t" id="t92" style="top:679.41px;font-size:16.8px;line-height:16.8px;font-weight:400;color:#484848;letter-spacing:0.105px;right:946.06px;">$10,000.00</span>
<span class="t" id="t93" style="top:679.41px;font-size:16.8px;line-height:16.8px;font-weight:400;color:#484848;letter-spacing:0.435px;left:1307.90px;">$8,000.00</span>
<span class="t" id="t94" style="top:679.41px;font-size:16.8px;line-height:16.8px;font-weight:400;color:#484848;letter-spacing:0.360px;left:1475.80px;">$0.00</span>
<span class="t" id="t95" style="top:679.41px;font-size:16.8px;line-height:16.8px;font-weight:400;color:#484848;left:1788.00px;">N</span>
<span class="t" id="t96" style="top:739.25px;font-size:16.8px;line-height:16.8px;font-weight:400;color:#22718c;letter-spacing:-0.728px;left:62.60px;">TTEST2</span>
<span class="t" id="t97" style="top:739.25px;font-size:16.8px;line-height:16.8px;font-weight:400;color:#484848;letter-spacing:0.077px;left:215.70px;">Invoice</span>
<span class="t" id="t98" style="top:739.25px;font-size:16.8px;line-height:16.8px;font-weight:400;color:#484848;letter-spacing:-0.024px;left:368.60px;">Carrefour</span>
<span class="t" id="t99" style="top:739.25px;font-size:16.8px;line-height:16.8px;font-weight:400;color:#484848;letter-spacing:0.170px;left:467.10px;">Danone</span>
<span class="t" id="t100" style="top:739.25px;font-size:16.8px;line-height:16.8px;font-weight:400;color:#484848;letter-spacing:-0.577px;left:584.00px;">This is PROGRAM1</span>
<span class="t" id="t101" style="top:739.25px;font-size:16.8px;line-height:16.8px;font-weight:400;color:#484848;letter-spacing:0.199px;left:742.40px;">2020-01-20</span>
<span class="t" id="t102" style="top:739.25px;font-size:16.8px;line-height:16.8px;font-weight:400;color:#484848;letter-spacing:0.005px;right:946.16px;">$15,000.00</span>
<span class="t" id="t103" style="top:739.25px;font-size:16.8px;line-height:16.8px;font-weight:400;color:#484848;letter-spacing:-0.095px;left:1307.90px;">$12,000.00</span>
<span class="t" id="t104" style="top:739.25px;font-size:16.8px;line-height:16.8px;font-weight:400;color:#484848;letter-spacing:0.360px;left:1475.80px;">$0.00</span>
<span class="t" id="t105" style="top:739.25px;font-size:16.8px;line-height:16.8px;font-weight:400;color:#484848;left:1788.00px;">N</span>
<span class="t" id="t106" style="top:799.08px;font-size:16.8px;line-height:16.8px;font-weight:400;color:#22718c;letter-spacing:-0.893px;left:62.60px;">YU</span>
<span class="t" id="t107" style="top:799.08px;font-size:16.8px;line-height:16.8px;font-weight:400;color:#484848;letter-spacing:0.077px;left:215.70px;">Invoice</span>
<span class="t" id="t108" style="top:799.08px;font-size:16.8px;line-height:16.8px;font-weight:400;color:#484848;letter-spacing:-0.024px;left:368.60px;">Carrefour</span>
<span class="t" id="t109" style="top:799.08px;font-size:16.8px;line-height:16.8px;font-weight:400;color:#484848;letter-spacing:0.170px;left:467.10px;">Danone</span>
<span class="t" id="t110" style="top:799.08px;font-size:16.8px;line-height:16.8px;font-weight:400;color:#484848;letter-spacing:-0.577px;left:584.00px;">This is PROGRAM1</span>
<span class="t" id="t111" style="top:799.08px;font-size:16.8px;line-height:16.8px;font-weight:400;color:#484848;letter-spacing:0.199px;left:742.40px;">2020-01-20</span>
<span class="t" id="t112" style="top:799.08px;font-size:16.8px;line-height:16.8px;font-weight:400;color:#484848;letter-spacing:-0.017px;right:946.18px;">$10,200.00</span>
<span class="t" id="t113" style="top:799.08px;font-size:16.8px;line-height:16.8px;font-weight:400;color:#484848;letter-spacing:-0.353px;left:1307.90px;">$8,160.00</span>
<span class="t" id="t114" style="top:799.08px;font-size:16.8px;line-height:16.8px;font-weight:400;color:#484848;letter-spacing:0.360px;left:1475.80px;">$0.00</span>
<span class="t" id="t115" style="top:799.08px;font-size:16.8px;line-height:16.8px;font-weight:400;color:#484848;left:1788.00px;">N</span>
<span class="t" id="t116" style="top:858.94px;font-size:16.8px;line-height:16.8px;font-weight:400;color:#22718c;letter-spacing:-0.172px;left:62.60px;">TFB204</span>
<span class="t" id="t117" style="top:858.94px;font-size:16.8px;line-height:16.8px;font-weight:400;color:#484848;letter-spacing:0.077px;left:215.70px;">Invoice</span>
<span class="t" id="t118" style="top:858.94px;font-size:16.8px;line-height:16.8px;font-weight:400;color:#484848;letter-spacing:-0.024px;left:368.60px;">Carrefour</span>
<span class="t" id="t119" style="top:858.94px;font-size:16.8px;line-height:16.8px;font-weight:400;color:#484848;letter-spacing:0.170px;left:467.10px;">Danone</span>
<span class="t" id="t120" style="top:858.94px;font-size:16.8px;line-height:16.8px;font-weight:400;color:#484848;letter-spacing:-0.577px;left:584.00px;">This is PROGRAM1</span>
<span class="t" id="t121" style="top:858.94px;font-size:16.8px;line-height:16.8px;font-weight:400;color:#484848;letter-spacing:0.199px;left:742.40px;">2020-01-20</span>
<span class="t" id="t122" style="top:858.94px;font-size:16.8px;line-height:16.8px;font-weight:400;color:#484848;letter-spacing:0.010px;right:946.16px;">$1,000.00</span>
<span class="t" id="t123" style="top:858.94px;font-size:16.8px;line-height:16.8px;font-weight:400;color:#484848;letter-spacing:0.529px;left:1307.90px;">$800.00</span>
<span class="t" id="t124" style="top:858.94px;font-size:16.8px;line-height:16.8px;font-weight:400;color:#484848;letter-spacing:0.360px;left:1475.80px;">$0.00</span>
<span class="t" id="t125" style="top:858.94px;font-size:16.8px;line-height:16.8px;font-weight:400;color:#484848;left:1788.00px;">N</span>
<span class="t" id="t126" style="top:917.80px;font-size:16.8px;line-height:16.8px;font-weight:400;color:#22718c;letter-spacing:-0.531px;left:62.60px;">QATEST03</span>
<span class="t" id="t127" style="top:917.80px;font-size:16.8px;line-height:16.8px;font-weight:400;color:#484848;letter-spacing:0.077px;left:215.70px;">Invoice</span>
<span class="t" id="t128" style="top:917.80px;font-size:16.8px;line-height:16.8px;font-weight:400;color:#484848;letter-spacing:-0.024px;left:368.60px;">Carrefour</span>
<span class="t" id="t129" style="top:917.80px;font-size:16.8px;line-height:16.8px;font-weight:400;color:#484848;letter-spacing:0.170px;left:467.10px;">Danone</span>
<span class="t" id="t130" style="top:917.80px;font-size:16.8px;line-height:16.8px;font-weight:400;color:#484848;letter-spacing:-0.577px;left:584.00px;">This is PROGRAM1</span>
<span class="t" id="t131" style="top:917.80px;font-size:16.8px;line-height:16.8px;font-weight:400;color:#484848;letter-spacing:0.199px;left:742.40px;">2020-01-20</span>
<span class="t" id="t132" style="top:917.80px;font-size:16.8px;line-height:16.8px;font-weight:400;color:#484848;letter-spacing:0.285px;right:945.88px;">$8,888.00</span>
<span class="t" id="t133" style="top:917.80px;font-size:16.8px;line-height:16.8px;font-weight:400;color:#484848;letter-spacing:-1.110px;left:1307.90px;">$7,110.40</span>
<span class="t" id="t134" style="top:917.80px;font-size:16.8px;line-height:16.8px;font-weight:400;color:#484848;letter-spacing:0.360px;left:1475.80px;">$0.00</span>
<span class="t" id="t135" style="top:917.80px;font-size:16.8px;line-height:16.8px;font-weight:400;color:#484848;left:1788.00px;">N</span>
<span class="t" id="t136" style="top:973.91px;font-size:16.8px;line-height:16.8px;font-weight:400;color:#484848;letter-spacing:-0.286px;left:13.70px;">Page</span>
<span class="t" id="t137" style="top:975.11px;font-size:16.8px;line-height:16.8px;font-weight:400;color:#484848;left:85.50px;">1</span>
<span class="t" id="t138" style="top:973.91px;font-size:16.8px;line-height:16.8px;font-weight:400;color:#484848;letter-spacing:0.447px;left:116.30px;">of 4</span>
<span class="t" id="t139" style="top:973.91px;font-size:16.8px;line-height:16.8px;font-weight:400;color:#484848;letter-spacing:0.534px;left:166.00px;">(1-10 of 32 items)</span>
<span class="t" id="t140" style="top:976.50px;font-size:16.8px;line-height:16.8px;font-weight:400;color:#222;left:415.50px;">1</span>
<span class="t" id="t141" style="top:976.50px;font-size:16.8px;line-height:16.8px;font-weight:400;color:#22718c;left:447.00px;">2</span>
<span class="t" id="t142" style="top:976.50px;font-size:16.8px;line-height:16.8px;font-weight:400;color:#22718c;left:478.60px;">3</span>
<span class="t" id="t143" style="top:976.50px;font-size:16.8px;line-height:16.8px;font-weight:400;color:#22718c;left:509.50px;">4</span>
<span class="t" id="t144" style="top:1024.91px;font-size:14.1px;line-height:14.1px;font-weight:400;color:#2e2e2e;-webkit-text-stroke:0.2px #2e2e2e;letter-spacing:0.361px;left:9.00px;">Remarks</span>
<span class="t" id="t145" style="top:1024.91px;font-size:14.1px;line-height:14.1px;font-weight:400;color:#2e2e2e;-webkit-text-stroke:0.2px #2e2e2e;letter-spacing:0.986px;left:482.30px;">Auto-Apportion</span>
<span class="t" id="t146" style="top:1024.91px;font-size:14.1px;line-height:14.1px;font-weight:400;color:#2e2e2e;-webkit-text-stroke:0.2px #2e2e2e;letter-spacing:0.638px;left:954.00px;">Finance Amount</span>
<span class="t" id="t147" style="top:1059.90px;font-size:14.7px;line-height:14.7px;font-weight:400;color:#333;-webkit-text-stroke:0.2px #333;letter-spacing:0.151px;left:1444.00px;">Apply</span>
<span class="t" id="t148" style="top:1059.90px;font-size:14.7px;line-height:14.7px;font-weight:400;color:#333;-webkit-text-stroke:0.2px #333;letter-spacing:0.519px;left:1527.25px;">Undo</span>
<span class="t" id="t149" style="top:1136.00px;font-size:18.6px;line-height:18.6px;font-weight:400;color:#1c1c1c;-webkit-text-stroke:0.3px #1c1c1c;letter-spacing:0.624px;left:10.00px;">Summary</span>
<span class="t" id="t150" style="top:1168.80px;font-size:14.1px;line-height:14.1px;font-weight:400;color:#2e2e2e;-webkit-text-stroke:0.2px #2e2e2e;letter-spacing:0.671px;left:10.00px;">Total Instruments</span>
<span class="t" id="t151" style="top:1168.80px;font-size:14.1px;line-height:14.1px;font-weight:400;color:#2e2e2e;-webkit-text-stroke:0.2px #2e2e2e;letter-spacing:0.742px;left:482.50px;">Total Amount</span>
<span class="t" id="t152" style="top:1168.80px;font-size:14.1px;line-height:14.1px;font-weight:400;color:#2e2e2e;-webkit-text-stroke:0.2px #2e2e2e;letter-spacing:0.558px;left:955.00px;">Total Finance Amount</span>
<span class="t" id="t153" style="top:1285.90px;font-size:14.7px;line-height:14.7px;font-weight:400;color:#333;-webkit-text-stroke:0.2px #333;letter-spacing:0.374px;left:1443.75px;">Submit</span>
<span class="t" id="t154" style="top:1285.90px;font-size:14.7px;line-height:14.7px;font-weight:400;color:#333;-webkit-text-stroke:0.2px #333;letter-spacing:-0.091px;left:1536.50px;">Cancel</span>
</body></html>
